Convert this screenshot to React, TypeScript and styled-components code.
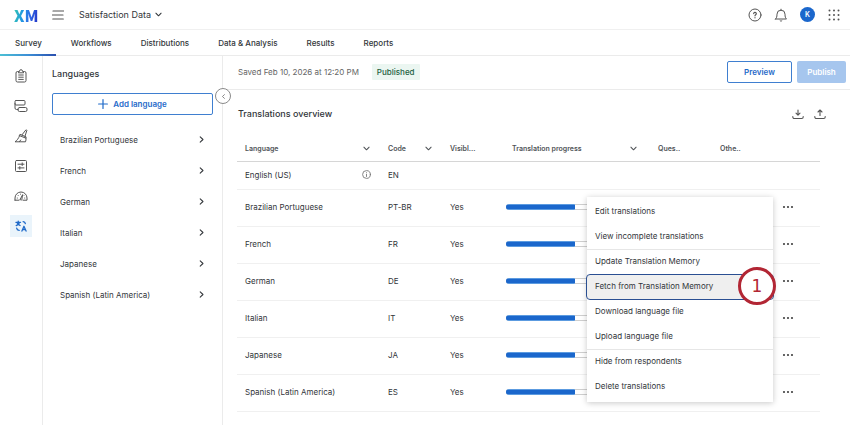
import React from 'react';
import styled, { createGlobalStyle } from 'styled-components';

const Global = createGlobalStyle`
  * { box-sizing: border-box; }
  body { margin: 0; background: #fff; color: #32363a; font: 8px/12px Inter, "Noto Sans", sans-serif; }
  button, a { font: inherit; color: inherit; text-decoration: none; }
  button { background: none; border: 0; padding: 0; margin: 0; cursor: pointer; }
  h1, h2, ul, menu { margin: 0; padding: 0; font: inherit; list-style: none; }
  svg { display: block; flex: none; fill: none; stroke: currentColor; stroke-linecap: round; stroke-linejoin: round; }
`;

const Header = styled.header`
  display: flex; align-items: center; height: 30px; padding: 0 9px 0 14px;
  border-bottom: 1px solid #f0f0f0;
`;
const Logo = styled.a`
  width: 24px; margin-right: 14px;
  && { font: 900 16px/18px "Noto Sans CJK SC", sans-serif; color: transparent; background: linear-gradient(100deg, #35c3b4 5%, #1f9be0 35%, #2f6be8 65%, #2330c4); background-clip: text; }
`;
const IconButton = styled.button`
  display: grid; place-items: center;
  && { color: #555; }
`;
const ProjectMenu = styled.button`
  display: flex; align-items: center; gap: 4px;
  && { margin-left: 15px; font-size: 9px; }
`;
const HeaderActions = styled.div`
  display: flex; align-items: center; gap: 12px; margin-left: auto;
`;
const Avatar = styled.button`
  && { width: 15px; height: 15px; border-radius: 50%; background: #1b67cc; color: #fff; font-size: 7px; font-weight: 600; line-height: 15px; }
`;

const Tabs = styled.nav`
  display: flex; height: 26px; border-bottom: 1px solid #ebebeb;
`;
const Tab = styled.a<{ $active?: boolean }>`
  position: relative; display: flex; align-items: center; height: 26px; padding: 0 14px 1px 15px;
  && { font-weight: 500; }
  ${p => p.$active && `&::after {
    content: ""; position: absolute; left: 0; right: 0; bottom: 0; height: 2px;
    background: linear-gradient(90deg, #4cc0d4, #3d8fd6 50%, #2a4fae);
  }`}
`;

const Body = styled.div`
  display: flex; min-height: calc(100vh - 56px);
`;
const Rail = styled.nav`
  display: flex; flex-direction: column; align-items: center; gap: 8px; flex: none;
  width: 43px; padding-top: 9px; border-right: 1px solid #ebebeb;
`;
const RailButton = styled.button<{ $active?: boolean }>`
  display: grid; place-items: center; width: 22px; height: 22px;
  && { color: ${p => (p.$active ? '#1f6ac9' : '#555')}; background: ${p => (p.$active ? '#eaf4fb' : 'none')}; }
`;

const Panel = styled.aside`
  position: relative; flex: none; width: 180px; padding: 10px 9px 0; border-right: 1px solid #ebebeb;
`;
const PanelTitle = styled.h2`
  && { font-size: 9px; line-height: 16px; font-weight: 500; }
`;
const OutlineButton = styled.button`
  display: flex; align-items: center; justify-content: center; gap: 5px; height: 22px;
  && { border: 1px solid #3f7fd0; border-radius: 2px; color: #1f6ac9; font-weight: 600; }
`;
const AddButton = styled(OutlineButton)`
  width: 100%;
  && { margin: 11px 0 9px; }
`;
const CollapseButton = styled.button`
  position: absolute; right: -9px; top: 32px; display: grid; place-items: center;
  && { width: 16px; height: 16px; border: 1px solid #8a8a8a; border-radius: 50%; background: #fff; color: #666; }
`;
const LanguageLink = styled.a`
  display: flex; align-items: center; justify-content: space-between; height: 31px; padding: 0 8px;
`;

const Main = styled.main`
  flex: 1; min-width: 0;
`;
const Toolbar = styled.div`
  display: flex; align-items: center; height: 34px; padding: 0 4px 1px 15px; border-bottom: 1px solid #ebebeb;
`;
const SavedText = styled.span`
  color: #666;
`;
const StatusTag = styled.span`
  margin-left: 13px; padding: 2px 5px; border-radius: 1px; background: #ebf6f1; color: #22603f; font-weight: 500;
`;
const ToolbarActions = styled.div`
  display: flex; gap: 5px; margin-left: auto;
  ${OutlineButton} { width: 65px; }
`;
const PrimaryButton = styled.button`
  && { width: 49px; height: 22px; border-radius: 2px; background: #a6c6ee; color: #fff; font-weight: 600; }
`;
const Section = styled.section`
  padding: 16px 30px 0 14px;
`;
const SectionHead = styled.div`
  display: flex; align-items: center; justify-content: space-between; height: 16px; padding-left: 1px;
`;
const SectionTitle = styled.h1`
  && { font-size: 9px; font-weight: 500; }
`;
const SectionTools = styled.div`
  display: flex; gap: 10px; margin-right: -6px;
`;

const Table = styled.table`
  width: 100%; margin-top: 13px; table-layout: fixed; border-collapse: separate; border-spacing: 0;
`;
const Col = styled.col<{ $w?: number }>`
  ${p => p.$w && `width: ${p.$w}px;`}
`;
const Th = styled.th`
  height: 27px; padding: 1px 10px 0 8px; border-bottom: 1px solid #d6d6d6; text-align: left;
  font-size: 7px; font-weight: 600; color: #505458; white-space: nowrap;
`;
const Td = styled.td<{ $short?: boolean }>`
  position: relative; height: ${p => (p.$short ? 28 : 37)}px; padding: 0 9px 2px 8px; border-bottom: 1px solid #f0f0f0;
`;
const BarCell = styled(Td)`
  padding: 0 18px 2px 2px;
`;
const Between = styled.div`
  display: flex; align-items: center; justify-content: space-between;
`;
const ProgressHead = styled(Between)`
  margin-right: 3px;
`;
const Track = styled.div`
  display: flex; height: 6px; border-radius: 3px; background: #fff; box-shadow: inset 0 0 0 1px #cfcfcf;
`;
const Fill = styled.div`
  border-radius: 3px 1px 1px 3px; background: linear-gradient(#5c9be0 0 1px, #1b67cc 1px 5px, #5c9be0 5px);
`;
const InfoButton = styled.button`
  && { color: #777; }
`;
const MoreButton = styled.button`
  display: block;
  && { color: #444; }
`;

const Menu = styled.menu`
  position: absolute; z-index: 2; top: 7px; right: 47px; width: 186px;
  && { padding: 2px 0 3px; }
  background: #fff; box-shadow: 0 1px 6px rgba(0, 0, 0, 0.22);
`;
const MenuItem = styled.li<{ $divided?: boolean }>`
  position: relative; border-top: 1px solid ${p => (p.$divided ? '#e6e6e6' : 'transparent')};
`;
const MenuButton = styled.button<{ $focused?: boolean }>`
  display: block; width: 100%; height: 24px; text-align: left;
  && { padding: 0 8px 2px; }
  ${p => p.$focused && `&& { background: #efefef; border-radius: 3px; outline: 1px solid #2a4f92; }`}
`;
const Marker = styled.span`
  position: absolute; right: -3px; top: -8px; width: 38px; height: 38px; border: 3px solid #b22634; border-radius: 50%;
  background: #fff; color: #b22634; font: 17px/32px "DejaVu Sans", sans-serif; text-align: center;
`;

const Chevron = ({ d = 'down', s = 7 }: { d?: 'down' | 'right' | 'left'; s?: number }) => (
  <svg width={s} height={s} viewBox="0 0 8 8" strokeWidth="1.2" aria-hidden="true">
    <path d={{ down: 'M1 2.5 4 5.5 7 2.5', right: 'M2.5 1 5.7 4 2.5 7', left: 'M5.5 1 2.3 4 5.5 7' }[d]} />
  </svg>
);

const railIcons: { name: string; art: React.ReactNode }[] = [
  { name: 'Survey', art: <path d="M4.500 2.500H3.500a1.500 1.500 0 0 0-1.500 1.500V11.500a1.500 1.500 0 0 0 1.500 1.500h7a1.500 1.500 0 0 0 1.500-1.500V4a1.500 1.500 0 0 0-1.500-1.500H9.500M4.500 3.500l1-1.300a1.500 1.500 0 0 1 3 0l1 1.300zM4.700 6h4.600M4.700 8.200h4.600M4.700 10.400h4.600" /> },
  { name: 'Survey flow', art: <><rect x="1" y="1.500" width="10" height="4.500" rx="1" /><rect x="4" y="8.500" width="9" height="4" rx="1.500" /><path d="M1 4.500v4.500a1.500 1.500 0 0 0 1.500 1.500H4" /></> },
  { name: 'Look and feel', art: <path d="M8 5.800 11.800 1a.6.600 0 0 1 1 .6L11 7.200M6.300 5.500l5.700 2.300v1.400L5.600 6.700zM5.600 6.700C4.500 9.500 3 11.500 1 12.800h10.500c.5-1.200.6-2.400.5-3.600M5.500 12.600l1.200-1.600" /> },
  { name: 'Survey options', art: <><rect x="1.500" y="1.500" width="11" height="11" rx="1" /><path d="M4 5.200h6M4 8.900h6M8.200 3.900v2.600M5.800 7.600v2.600" /></> },
  { name: 'Quotas', art: <path d="M1 11.200V9a6 6 0 0 1 12 0v2.200H9M1 11.200h4M3.300 9v.1M10.700 9v.1M4.200 6.500l.2.200M9.900 6.600l.1-.1M6.500 5.200h.1M6.200 10.300 8.500 6M6.200 10.300c0 1.300 1.700 1.300 1.700 0L8.500 6" /> },
];

const languages: [string, string][] = [
  ['Brazilian Portuguese', 'PT-BR'], ['French', 'FR'], ['German', 'DE'],
  ['Italian', 'IT'], ['Japanese', 'JA'], ['Spanish (Latin America)', 'ES'],
];
const menuItems: { label: string; divided?: boolean; step?: number }[] = [
  { label: 'Edit translations' },
  { label: 'View incomplete translations' },
  { label: 'Update Translation Memory', divided: true },
  { label: 'Fetch from Translation Memory', step: 1 },
  { label: 'Download language file' },
  { label: 'Upload language file' },
  { label: 'Hide from respondents', divided: true },
  { label: 'Delete translations' },
];

const RowMenu = () => (
  <Menu>
    {menuItems.map(item => (
      <MenuItem key={item.label} $divided={item.divided}>
        <MenuButton $focused={!!item.step}>{item.label}</MenuButton>
        {item.step && <Marker>{item.step}</Marker>}
      </MenuItem>
    ))}
  </Menu>
);

export default function App() {
  return (
    <>
      <Global />
      <Header>
        <Logo href="#">XM</Logo>
        <IconButton aria-label="Menu">
          <svg width="12" height="10" viewBox="0 0 12 10" strokeWidth="1.200"><path d="M1 1h10.500M.5 5h10.500M.8 9h10.500" /></svg>
        </IconButton>
        <ProjectMenu>Satisfaction Data <Chevron /></ProjectMenu>
        <HeaderActions>
          <IconButton aria-label="Help">
            <svg width="14" height="14" viewBox="0 0 14 14" strokeWidth="1"><circle cx="7" cy="7" r="6" /><path d="M5.700 5.600a1.300 1.300 0 1 1 2 1.100c-.5.400-.7.600-.7 1.100M7 9.700v.1" strokeWidth="1.200" /></svg>
          </IconButton>
          <IconButton aria-label="Notifications">
            <svg width="14" height="14" viewBox="0 0 14 14" strokeWidth="1"><path d="M1.500 11h11c-1-1-1.500-2-1.500-4.800a4 4 0 0 0-8 0C3 9 2.500 10 1.500 11zM7 1.200v1M6 12.700a1.200 1.200 0 0 0 2 0" /></svg>
          </IconButton>
          <Avatar aria-label="Account">K</Avatar>
          <IconButton aria-label="Applications">
            <svg width="14" height="14" viewBox="0 0 14 14" strokeWidth="2"><path d="M2.500 2.500h0M7 2.500h0M11.500 2.500h0M2.500 7h0M7 7h0M11.500 7h0M2.500 11.500h0M7 11.500h0M11.500 11.500h0" /></svg>
          </IconButton>
        </HeaderActions>
      </Header>
      <Tabs>
        {['Survey', 'Workflows', 'Distributions', 'Data & Analysis', 'Results', 'Reports'].map((t, i) => (
          <Tab key={t} href="#" $active={i === 0}>{t}</Tab>
        ))}
      </Tabs>
      <Body>
        <Rail>
          {railIcons.map(icon => (
            <RailButton key={icon.name} aria-label={icon.name}>
              <svg width="14" height="14" viewBox="0 0 14 14" strokeWidth="1">{icon.art}</svg>
            </RailButton>
          ))}
          <RailButton $active aria-label="Translations">
            <svg width="12" height="12" viewBox="0 0 13 13" strokeWidth="1.400">
              <path d="M1 2.500h5M3.500 1.300v1.200M5 2.500C4.500 4.300 3 5.300 1.300 6M2 2.500C2.500 4 4 5.300 5.500 6M7.500 12 9.700 6.800 12 12M8.300 10.300h2.900M8.800 1.700c1.300.2 2.200.9 2.400 2.300M1.800 8.800c.2 1.300 1.300 2.200 2.700 2.400" />
            </svg>
          </RailButton>
        </Rail>
        <Panel>
          <PanelTitle>Languages</PanelTitle>
          <AddButton>
            <svg width="10" height="10" viewBox="0 0 10 10" strokeWidth="1.200"><path d="M5 .6v8.800M.6 5h8.800" /></svg>
            Add language
          </AddButton>
          <CollapseButton aria-label="Collapse panel"><Chevron d="left" s={5} /></CollapseButton>
          <ul>
            {languages.map(([name]) => (
              <li key={name}><LanguageLink href="#">{name}<Chevron d="right" /></LanguageLink></li>
            ))}
          </ul>
        </Panel>
        <Main>
          <Toolbar>
            <SavedText>Saved Feb 10, 2026 at 12:20 PM</SavedText>
            <StatusTag>Published</StatusTag>
            <ToolbarActions>
              <OutlineButton>Preview</OutlineButton>
              <PrimaryButton>Publish</PrimaryButton>
            </ToolbarActions>
          </Toolbar>
          <Section>
            <SectionHead>
              <SectionTitle>Translations overview</SectionTitle>
              <SectionTools>
                <IconButton aria-label="Download">
                  <svg width="12" height="12" viewBox="0 0 12 12" strokeWidth="1.100"><path d="M6 2v5M4 5.200 6 7.200l2-2M.8 8.500v.5a1.500 1.500 0 0 0 1.500 1.500h7.400a1.500 1.500 0 0 0 1.500-1.500v-.5" /></svg>
                </IconButton>
                <IconButton aria-label="Upload">
                  <svg width="12" height="12" viewBox="0 0 12 12" strokeWidth="1.100"><path d="M6 7.500v-5M4 4 6 2l2 2M.8 8.500v.5a1.500 1.500 0 0 0 1.500 1.500h7.400a1.500 1.500 0 0 0 1.500-1.500v-.5" /></svg>
                </IconButton>
              </SectionTools>
            </SectionHead>
            <Table>
              <colgroup>
                <Col /><Col $w={62} /><Col $w={62} /><Col $w={146} /><Col $w={62} /><Col $w={62} /><Col $w={46} />
              </colgroup>
              <thead>
                <tr>
                  <Th><Between>Language<Chevron /></Between></Th>
                  <Th><Between>Code<Chevron /></Between></Th>
                  <Th>Visibl...</Th>
                  <Th><ProgressHead>Translation progress<Chevron /></ProgressHead></Th>
                  <Th>Ques..</Th>
                  <Th>Othe..</Th>
                  <Th aria-label="Actions" />
                </tr>
              </thead>
              <tbody>
                <tr>
                  <Td $short>
                    <Between>
                      English (US)
                      <InfoButton aria-label="Base language">
                        <svg width="9" height="9" viewBox="0 0 9 9" strokeWidth="0.900"><circle cx="4.500" cy="4.500" r="3.900" /><path d="M4.500 4.300v2.200M4.500 2.700v.1" /></svg>
                      </InfoButton>
                    </Between>
                  </Td>
                  <Td $short>EN</Td><Td $short /><Td $short /><Td $short /><Td $short /><Td $short />
                </tr>
                {languages.map(([name, code], i) => (
                  <tr key={code}>
                    <Td>{name}</Td>
                    <Td>{code}</Td>
                    <Td>Yes</Td>
                    <BarCell><Track><Fill style={{ width: '55%' }} /></Track></BarCell>
                    <Td />
                    <Td />
                    <Td>
                      <MoreButton aria-label={`Actions for ${name}`}>
                        <svg width="12" height="4" viewBox="0 0 12 4" strokeWidth="2.200"><path d="M2 2h0M6 2h0M10 2h0" /></svg>
                      </MoreButton>
                      {i === 0 && <RowMenu />}
                    </Td>
                  </tr>
                ))}
              </tbody>
            </Table>
          </Section>
        </Main>
      </Body>
    </>
  );
}
